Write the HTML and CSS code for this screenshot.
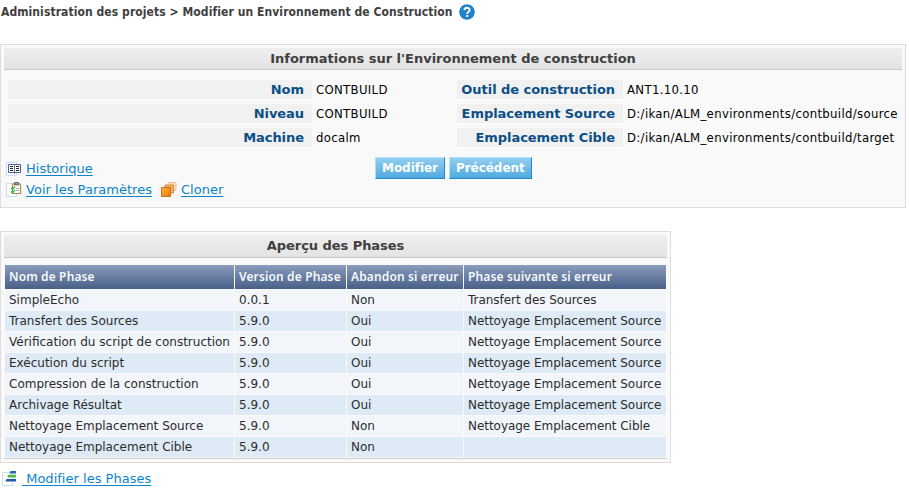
FILE: index.html
```html
<!DOCTYPE html>
<html lang="fr">
<head>
<meta charset="utf-8">
<title>Modifier un Environnement de Construction</title>
<link rel="stylesheet" href="styles.css">
</head>
<body>
<header class="crumbs">
  <span>Administration des projets &gt; Modifier un Environnement de Construction</span>
  <svg class="help" width="16" height="16" viewBox="0 0 16 16"><circle cx="8" cy="8" r="7.8" fill="#1f83c9"/><path d="M5.4 6.2C5.4 2.9 10.6 2.9 10.6 6C10.6 7.9 8.2 7.8 8.2 10" fill="none" stroke="#fff" stroke-width="1.9"/><rect x="7.2" y="11" width="2" height="2" fill="#fff"/></svg>
</header>

<section class="panel info">
  <h2 class="bar">Informations sur l'Environnement de construction</h2>
  <div class="fields">
    <span class="label">Nom</span><span class="value">CONTBUILD</span>
    <span class="label">Outil de construction</span><span class="value">ANT1.10.10</span>
    <span class="label">Niveau</span><span class="value">CONTBUILD</span>
    <span class="label">Emplacement Source</span><span class="value">D:/ikan/ALM_environments/contbuild/source</span>
    <span class="label">Machine</span><span class="value">docalm</span>
    <span class="label">Emplacement Cible</span><span class="value">D:/ikan/ALM_environments/contbuild/target</span>
  </div>
  <div class="actions">
    <div class="links">
      <div class="line">
        <svg class="icon" width="16" height="15" viewBox="0 0 16 15"><path d="M.5 1.5h10v13H.5z" fill="#fff" stroke="#c5dff0"/><path d="M2.5 3.5h12v8h-12z" fill="#fff" stroke="#4468a8"/><path d="M8.5 3v10" stroke="#777"/><path d="M4 5.5h3M4 7.5h3M4 9.5h3M10 5.5h3M10 7.5h3M10 9.5h3" stroke="#222"/></svg>
        <a href="#">Historique</a>
      </div>
      <div class="line">
        <svg class="icon" width="16" height="15" viewBox="0 0 16 15"><path d="M.5 1.5h10v13H.5z" fill="#fff" stroke="#c5dff0"/><path d="M6.5 2h8v9.5h-8z" fill="#fff" stroke="#a8894e" stroke-width="1.2"/><path d="M8.5 .5h4v2.5h-4z" fill="#999" stroke="#555" stroke-width=".8"/><path d="M5 6l1.3 1.3L9 4.5M5 9.5l1.3 1.3L9 8" fill="none" stroke="#32b84a" stroke-width="1.4"/><path d="M10 6.5h3M10 8.5h3" stroke="#aaa"/></svg>
        <a href="#">Voir les Paramètres</a>
        <svg class="icon clone" width="16" height="15" viewBox="0 0 16 15"><defs><linearGradient id="o" x2="1" y2="1"><stop stop-color="#ffb53c"/><stop offset="1" stop-color="#ef7600"/></linearGradient></defs><path d="M7 .5h8v8H7z" fill="#fde0b5" stroke="#e8b98b" stroke-width=".8"/><path d="M4 3h8.5v8H4z" fill="#f5b066" stroke="#c97b3c" stroke-width=".8"/><path d="M.5 5.5h9v9h-9z" fill="url(#o)" stroke="#bd5d13" stroke-width=".8"/></svg>
        <a href="#">Cloner</a>
      </div>
    </div>
    <div class="buttons">
      <button type="button">Modifier</button>
      <button type="button">Précédent</button>
    </div>
  </div>
</section>

<section class="panel phases">
  <h2 class="bar">Aperçu des Phases</h2>
  <table>
    <colgroup><col class="c1"><col class="c2"><col class="c3"><col class="c4"></colgroup>
    <thead><tr><th>Nom de Phase</th><th>Version de Phase</th><th>Abandon si erreur</th><th>Phase suivante si erreur</th></tr></thead>
    <tbody>
      <tr><td>SimpleEcho</td><td>0.0.1</td><td>Non</td><td>Transfert des Sources</td></tr>
      <tr><td>Transfert des Sources</td><td>5.9.0</td><td>Oui</td><td>Nettoyage Emplacement Source</td></tr>
      <tr><td>Vérification du script de construction</td><td>5.9.0</td><td>Oui</td><td>Nettoyage Emplacement Source</td></tr>
      <tr><td>Exécution du script</td><td>5.9.0</td><td>Oui</td><td>Nettoyage Emplacement Source</td></tr>
      <tr><td>Compression de la construction</td><td>5.9.0</td><td>Oui</td><td>Nettoyage Emplacement Source</td></tr>
      <tr><td>Archivage Résultat</td><td>5.9.0</td><td>Oui</td><td>Nettoyage Emplacement Source</td></tr>
      <tr><td>Nettoyage Emplacement Source</td><td>5.9.0</td><td>Non</td><td>Nettoyage Emplacement Cible</td></tr>
      <tr><td>Nettoyage Emplacement Cible</td><td>5.9.0</td><td>Non</td><td></td></tr>
    </tbody>
  </table>
</section>

<div class="footer">
  <svg width="15" height="15" viewBox="0 0 15 15"><path d="M.5 1.5h10v13H.5z" fill="#fff" stroke="#c5dff0"/><path d="M8.5 0H14v2.5H7.5z" fill="#2767ae"/><path d="M6 3.8h8v2.8H5.5z" fill="#4fba48"/><path d="M4.5 8H14v2.6H3.5z" fill="#1f5ca5"/></svg>
  <a href="#">&nbsp;Modifier les Phases</a>
</div>
</body>
</html>
```
FILE: styles.css
```css
* { box-sizing: border-box; }
body {
  margin: 0;
  background: #fff;
  color: #000;
  font: 13px/16px "DejaVu Sans", Verdana, sans-serif;
}
.crumbs {
  display: flex;
  align-items: center;
  height: 24px;
  padding-left: 1px;
  font: bold 12px/16px "DejaVu Sans Condensed", "DejaVu Sans", sans-serif;
  font-stretch: condensed;
  letter-spacing: 0.08px;
  color: #404040;
  white-space: nowrap;
}
.help { margin-left: 6px; }
.panel {
  border: 1px solid #ddd;
  background: #f9f9f9;
  padding: 3px;
}
.info { width: 906px; height: 164px; margin-top: 20px; }
.phases { width: 671px; height: 232px; margin-top: 23px; }
.bar {
  height: 22px;
  margin: 0;
  border-bottom: 1px solid #c8c8c8;
  background: linear-gradient(#eee, #e3e3e3);
  color: #404040;
  font-size: 13px;
  line-height: 21px;
  text-align: center;
}
.phases .bar { height: 23px; letter-spacing: -0.05px; }
.fields {
  display: grid;
  grid-template-columns: 304px 145px 166px 1fr;
  row-gap: 4px;
  margin: 10px 0 0 4px;
}
.label {
  height: 20px;
  padding-right: 8px;
  border-bottom: 1px solid #fff;
  background: #f1f1f1;
  color: #0b4f86;
  font-weight: bold;
  line-height: 20px;
  letter-spacing: -0.05px;
  text-align: right;
}
.value {
  padding-left: 4px;
  font-family: "DejaVu Sans Condensed", "DejaVu Sans", sans-serif;
  font-stretch: condensed;
  line-height: 20px;
  letter-spacing: 0.33px;
  white-space: nowrap;
}
.actions { display: flex; margin-top: 9px; }
.links { width: 371px; padding: 1px 0 0 2px; }
.line { display: flex; align-items: center; height: 21px; }
.icon { margin-right: 4px; }
.clone { margin-left: 9px; }
a { color: #0a84cc; text-underline-offset: 2px; }
.line a, .footer a { letter-spacing: 0.02px; }
.buttons { display: flex; gap: 4px; }
button {
  height: 22px;
  padding: 0 6px;
  border: 1px solid;
  border-color: #b0e2f8 #1f87ca #1f87ca #b0e2f8;
  background: linear-gradient(#93cdef, #4fabe0);
  color: #fff;
  font: bold 12px/18px "DejaVu Sans", Verdana, sans-serif;
  letter-spacing: -0.04px;
}
table {
  width: 663px;
  margin-top: 6px;
  border-collapse: separate;
  border-spacing: 1px;
  border-bottom: 1px solid #ccc;
  table-layout: fixed;
  font-size: 12px;
  line-height: 16px;
}
.c1 { width: 229px; }
.c2 { width: 111px; }
.c3 { width: 116px; }
th {
  height: 24px;
  padding: 0 4px;
  background: linear-gradient(#8b9dbd, #485f87);
  color: #f6f8fc;
  font-family: "Noto Sans", "DejaVu Sans", sans-serif;
  font-weight: 600;
  letter-spacing: 0.13px;
  text-align: left;
  white-space: nowrap;
}
td {
  height: 20px;
  padding: 0 4px;
  background: #f2f6fb;
  color: #2b2b2b;
  white-space: nowrap;
}
tbody tr:nth-child(even) td { background: #deebf6; }
td:last-child { letter-spacing: -0.04px; }
.footer { display: flex; margin: 8px 0 0 2px; }
.footer a { margin-left: 5px; }
```
